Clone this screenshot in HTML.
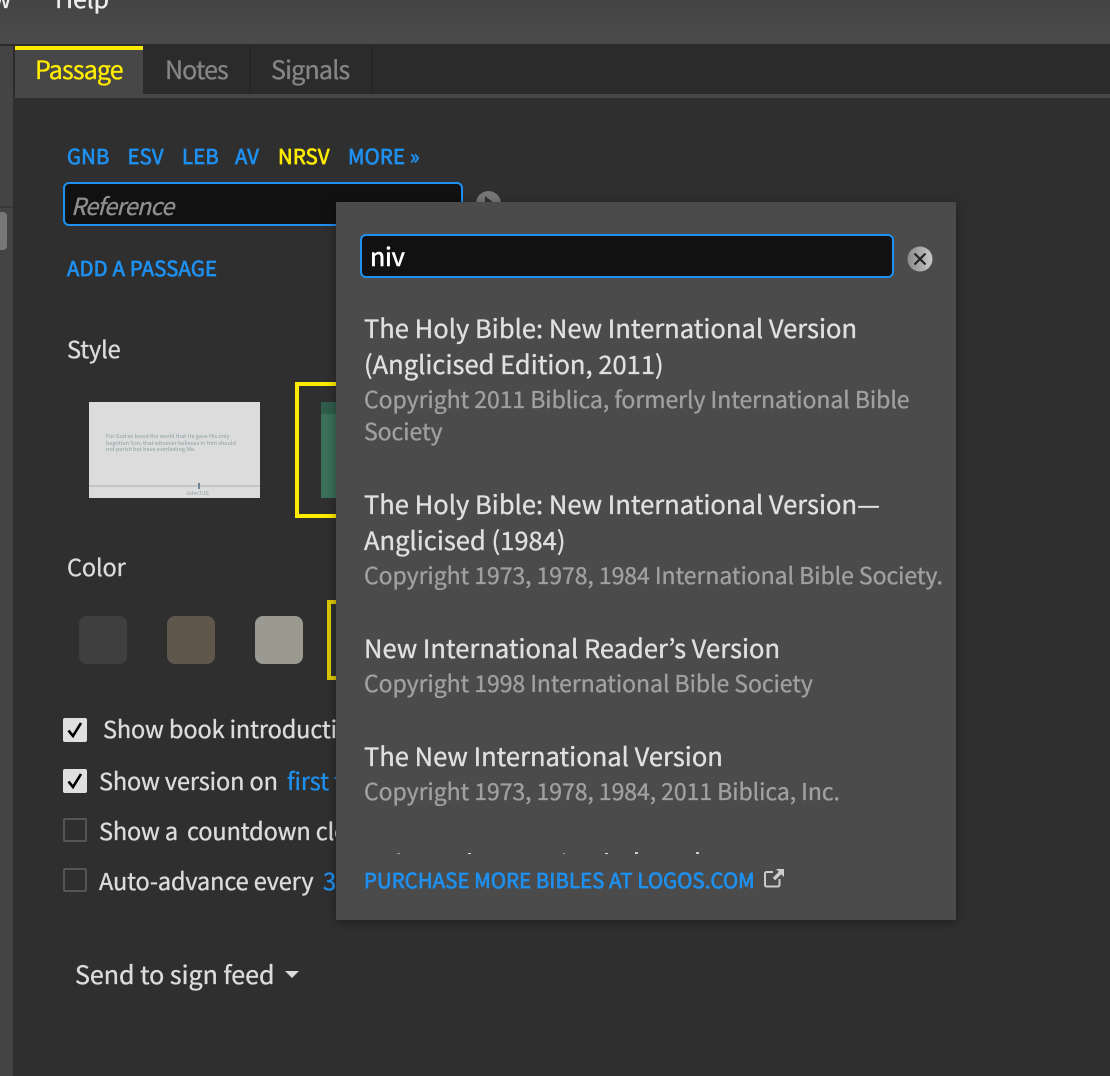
<!DOCTYPE html>
<html><head><meta charset="utf-8">
<style>
html,body{margin:0;padding:0;width:1110px;height:1076px;overflow:hidden;background:#2f2f2f}
body{position:relative;font-family:"Noto Sans CJK JP","Liberation Sans",sans-serif;color:#dcdcdc}
.a{position:absolute;white-space:nowrap;line-height:32px;height:32px;-webkit-text-stroke:.35px currentColor}
.b{position:absolute}
.blue{color:#1e90f0}
.t{font-size:25.5px;color:#e0e0e0;letter-spacing:.02px}
.c{font-size:23px;color:#a0a0a0;letter-spacing:-.05px}
.l{font-size:20.3px;letter-spacing:.2px;-webkit-text-stroke:.7px currentColor}
.s{font-size:23.5px;letter-spacing:-.12px;color:#dcdcdc}
</style></head><body>
<div class="b" style="left:0;top:0;width:1110px;height:44px;background:linear-gradient(#444,#4b4b4b)"></div>
<div class="a" style="left:55px;top:-18px;font-size:25px;color:#eee;letter-spacing:-.2px">Help</div>
<div class="a" style="left:-8px;top:-18px;font-size:24px;color:#eee">w</div>
<div class="b" style="left:0;top:44px;width:1110px;height:50px;background:#2b2b2b"></div>
<div class="b" style="left:15px;top:94px;width:1095px;height:4px;background:#464646"></div>
<div class="b" style="left:0;top:46px;width:13px;height:1030px;background:#444"></div>
<div class="b" style="left:0;top:206px;width:13px;height:2px;background:#383838"></div>
<div class="b" style="left:0;top:212px;width:7px;height:38px;background:#777;border-radius:0 4px 4px 0"></div>
<div class="b" style="left:15px;top:46px;width:128px;height:52px;background:#474747"></div>
<div class="b" style="left:15px;top:46px;width:128px;height:4px;background:#ffec00"></div>
<div class="a" style="left:35px;top:53px;font-size:25px;color:#ffec00;letter-spacing:-.85px">Passage</div>
<div class="a" style="left:165px;top:53px;font-size:25px;color:#858585;letter-spacing:-.9px">Notes</div>
<div class="a" style="left:271px;top:53px;font-size:25px;color:#858585;letter-spacing:-.8px">Signals</div>
<div class="b" style="left:249px;top:46px;width:2px;height:48px;background:#262626"></div>
<div class="b" style="left:371px;top:46px;width:2px;height:48px;background:#262626"></div>

<div class="a l blue" style="left:67px;top:139px">GNB</div>
<div class="a l blue" style="left:127.500px;top:139px">ESV</div>
<div class="a l blue" style="left:182px;top:139px">LEB</div>
<div class="a l blue" style="left:235px;top:139px">AV</div>
<div class="a l" style="left:278px;top:139px;color:#ffec00">NRSV</div>
<div class="a l blue" style="left:348px;top:139px">MORE »</div>
<div class="b" style="left:63px;top:182px;width:396px;height:40px;background:#111;border:2px solid #1e90f0;border-radius:6px"></div>
<div class="a" style="left:71px;top:189px;font-size:23.5px;font-style:italic;color:#8e8e8e;letter-spacing:-.7px">Reference</div>
<div class="b" style="left:476px;top:191px;width:25px;height:25px;border-radius:50%;background:#777"></div>
<div class="b" style="left:485px;top:196px;width:0;height:0;border:7px solid transparent;border-left:9px solid #333"></div>
<div class="a l blue" style="left:67px;top:251px">ADD A PASSAGE</div>

<div class="a s" style="left:67px;top:332px">Style</div>
<div class="b" style="left:89px;top:402px;width:171px;height:96px;background:#dcdcdc"></div>
<div class="b" style="left:89px;top:485px;width:171px;height:2px;background:#c3c5c5"></div>
<div class="b" style="left:198px;top:483px;width:2px;height:6px;background:#6d8590"></div>
<div class="a" style="left:106px;top:433px;height:8px;line-height:6.500px;font-size:5.500px;color:#8e9ea3;-webkit-text-stroke:0">For God so loved the world that He gave His only<br>begotten Son, that whoever believes in Him should<br>not perish but have everlasting life.</div>
<div class="a" style="left:186px;top:490px;height:7px;line-height:7px;font-size:5px;color:#8c9ba0;-webkit-text-stroke:0">John 3:16</div>
<div class="b" style="left:295px;top:382px;width:60px;height:128px;border:4px solid #ffec00;border-right:0"></div>
<div class="b" style="left:321px;top:402px;width:30px;height:96px;background:linear-gradient(#2f5c4b 0,#2f5c4b 12px,#3b6f5b 12px)"></div>

<div class="a s" style="left:67px;top:550px">Color</div>
<div class="b" style="left:79px;top:616px;width:48px;height:48px;border-radius:8px;background:#3f3f3f"></div>
<div class="b" style="left:167px;top:616px;width:48px;height:48px;border-radius:8px;background:#5f564c"></div>
<div class="b" style="left:255px;top:616px;width:48px;height:48px;border-radius:8px;background:#9a9a90"></div>
<div class="b" style="left:327px;top:600px;width:12px;height:72px;border:4px solid #dcc800;border-right:0"></div>

<div class="b" style="left:63px;top:718px;width:24px;height:24px;border-radius:2px;background:#e0e0e0"></div>
<svg class="b" style="left:63px;top:718px" width="24" height="24"><path d="M5.500 12.500l4.500 5.500 8-13" fill="none" stroke="#000" stroke-width="2.600"/></svg>
<div class="a s" style="left:103px;top:712px">Show book introduction</div>
<div class="b" style="left:63px;top:769px;width:24px;height:24px;border-radius:2px;background:#e0e0e0"></div>
<svg class="b" style="left:63px;top:769px" width="24" height="24"><path d="M5.500 12.500l4.500 5.500 8-13" fill="none" stroke="#000" stroke-width="2.600"/></svg>
<div class="a s" style="left:99px;top:764px">Show version on</div>
<div class="a s" style="left:287px;top:764px;color:#1e90f0">first time</div>
<div class="b" style="left:63px;top:818px;width:20px;height:20px;border:2px solid #555;border-radius:2px"></div>
<div class="a s" style="left:99px;top:814px">Show a</div>
<div class="a s" style="left:187px;top:814px">countdown clock</div>
<div class="b" style="left:63px;top:868px;width:20px;height:20px;border:2px solid #555;border-radius:2px"></div>
<div class="a s" style="left:99px;top:864px">Auto-advance every</div>
<div class="a s" style="left:323px;top:864px;color:#1e90f0">30</div>
<div class="a" style="left:75px;top:958px;font-size:25px;letter-spacing:0;color:#dcdcdc">Send to sign feed</div>
<div class="b" style="left:285px;top:971px;width:0;height:0;border:7px solid transparent;border-top:7px solid #dcdcdc;border-bottom:0"></div>

<div class="b" style="left:336px;top:202px;width:620px;height:718px;background:#4b4b4b;box-shadow:0 2px 10px rgba(0,0,0,.35)"></div>
<div class="b" style="left:360px;top:234px;width:530px;height:40px;background:#111;border:2px solid #1e90f0;border-radius:6px"></div>
<div class="a" style="left:370px;top:240px;font-size:25px;color:#fff;letter-spacing:-.2px;-webkit-text-stroke:.6px #fff">niv</div>
<svg class="b" style="left:907px;top:246px" width="26" height="26"><defs><linearGradient id="g" x1="0" x2="1"><stop offset="0" stop-color="#8a8a8a"/><stop offset="1" stop-color="#c8c8c8"/></linearGradient></defs><circle cx="13" cy="13" r="12.500" fill="url(#g)"/><path d="M7.500 7.500l11 11M18.500 7.500l-11 11" stroke="#222" stroke-width="2.200" fill="none"/></svg>

<div class="a t" style="left:364px;top:312px">The Holy Bible: New International Version</div>
<div class="a t" style="left:364px;top:348px">(Anglicised Edition, 2011)</div>
<div class="a c" style="left:364px;top:382px">Copyright 2011 Biblica, formerly International Bible</div>
<div class="a c" style="left:364px;top:414px">Society</div>
<div class="a t" style="left:364px;top:488px">The Holy Bible: New International Version—</div>
<div class="a t" style="left:364px;top:524px">Anglicised (1984)</div>
<div class="a c" style="left:364px;top:558px">Copyright 1973, 1978, 1984 International Bible Society.</div>
<div class="a t" style="left:364px;top:632px">New International Reader’s Version</div>
<div class="a c" style="left:364px;top:666px">Copyright 1998 International Bible Society</div>
<div class="a t" style="left:364px;top:740px">The New International Version</div>
<div class="a c" style="left:364px;top:774px">Copyright 1973, 1978, 1984, 2011 Biblica, Inc.</div>
<div class="b" style="left:397px;top:853px;width:3px;height:1px;background:#999"></div>
<div class="b" style="left:468px;top:853px;width:3px;height:1px;background:#ddd"></div>
<div class="b" style="left:563px;top:853px;width:2px;height:1px;background:#999"></div>
<div class="b" style="left:605px;top:853px;width:3px;height:1px;background:#ddd"></div>
<div class="b" style="left:635px;top:852px;width:3px;height:2px;background:#ccc"></div>
<div class="b" style="left:696px;top:852px;width:3px;height:2px;background:#ccc"></div>
<div class="a l blue" style="left:364px;top:863px;letter-spacing:.15px">PURCHASE MORE BIBLES AT LOGOS.COM</div>
<svg class="b" style="left:764px;top:868px" width="20" height="20"><path d="M9 4H2.500A1.500 1.500 0 0 0 1 5.500V17a1.500 1.500 0 0 0 1.500 1.500H14a1.500 1.500 0 0 0 1.500-1.500V11" fill="none" stroke="#ccc" stroke-width="2"/><path d="M12 1h8v8l-2.800-2.800-6 6-2.400-2.400 6-6z" fill="#ccc"/></svg>
</body></html>
